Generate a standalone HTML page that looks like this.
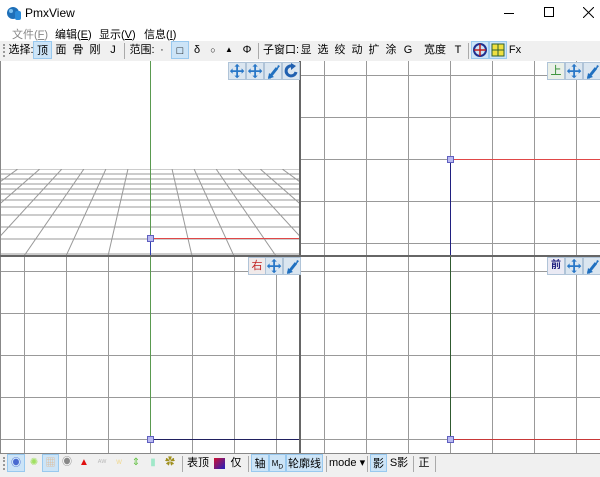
<!DOCTYPE html>
<html><head><meta charset="utf-8"><style>
*{margin:0;padding:0;box-sizing:border-box}
body{width:600px;height:473px;overflow:hidden;background:#f0f0f0;font-family:"Liberation Sans","Noto Sans CJK SC",sans-serif;font-size:12px;color:#000;position:relative}
.a{position:absolute;white-space:nowrap}
.btn{position:absolute;height:18px;top:0;line-height:18px;text-align:center;font-size:11px}
.sel{background:#cce4f7;border:1px solid #99c9ef}
.vb{position:absolute;width:18px;height:18px;background:#dbe6f0;border:1px solid #b0c4d8}
.sep{position:absolute;width:1px;height:16px;background:#aaa;top:2px}
</style></head><body>
<div class="a" style="left:0;top:0;width:600px;height:28px;background:#fff"></div>
<svg class="a" style="left:6px;top:5px" width="16" height="16"><circle cx="7" cy="8" r="6" fill="#1e6fb8"/><rect x="9" y="6" width="6" height="9" rx="2" fill="#2a8ad8"/><circle cx="5" cy="6" r="2" fill="#7cc0f0"/></svg>
<div class="a" style="left:25px;top:6px;font-size:12px">PmxView</div>
<div class="a" style="left:504px;top:13px;width:10px;height:1px;background:#000"></div>
<div class="a" style="left:544px;top:7px;width:10px;height:10px;border:1px solid #000"></div>
<svg class="a" style="left:583px;top:7px" width="11" height="11"><path d="M0 0L11 11M11 0L0 11" stroke="#000" stroke-width="1"/></svg>
<div class="a" style="left:0;top:28px;width:600px;height:14px;background:#fff"></div>
<div class="a" style="left:12px;top:26px;color:#888;font-size:11px">文件(<u>F</u>)</div>
<div class="a" style="left:55px;top:26px;font-size:11px">编辑(<u>E</u>)</div>
<div class="a" style="left:99px;top:26px;font-size:11px">显示(<u>V</u>)</div>
<div class="a" style="left:144px;top:26px;font-size:11px">信息(<u>I</u>)</div>
<div class="a" style="left:0;top:41px;width:600px;height:19px;background:#f0f0f0">
 <div class="a" style="left:3px;top:3px;width:2px;height:13px;border-left:2px dotted #999"></div>
 <div class="btn" style="left:8px;width:26px">选择:</div>
 <div class="btn sel" style="left:33px;width:19px">顶</div>
 <div class="btn" style="left:53px;width:16px">面</div>
 <div class="btn" style="left:70px;width:16px">骨</div>
 <div class="btn" style="left:87px;width:16px">刚</div>
 <div class="btn" style="left:106px;width:14px">J</div>
 <div class="sep" style="left:124px"></div>
 <div class="btn" style="left:128px;width:28px">范围:</div>
 <div class="btn" style="left:156px;width:12px">·</div>
 <div class="btn sel" style="left:171px;width:18px">□</div>
 <div class="btn" style="left:190px;width:14px">δ</div>
 <div class="btn" style="left:206px;width:14px;font-size:9px">○</div>
 <div class="btn" style="left:222px;width:14px;font-size:8px">▲</div>
 <div class="btn" style="left:240px;width:14px">Φ</div>
 <div class="sep" style="left:258px"></div>
 <div class="btn" style="left:263px;width:36px">子窗口:</div>
 <div class="btn" style="left:299px;width:14px">显</div>
 <div class="btn" style="left:316px;width:14px">选</div>
 <div class="btn" style="left:333px;width:14px">绞</div>
 <div class="btn" style="left:350px;width:14px">动</div>
 <div class="btn" style="left:367px;width:14px">扩</div>
 <div class="btn" style="left:384px;width:14px">涂</div>
 <div class="btn" style="left:402px;width:12px">G</div>
 <div class="btn" style="left:423px;width:24px">宽度</div>
 <div class="btn" style="left:452px;width:12px">T</div>
 <div class="sep" style="left:468px"></div>
 <div class="btn sel" style="left:471px;width:18px"><svg width="14" height="14" style="margin-top:1px"><circle cx="7" cy="7" r="6" fill="none" stroke="#203090" stroke-width="2"/><path d="M7 1V13M1 7H13" stroke="#c02020" stroke-width="1.5"/></svg></div>
 <div class="btn sel" style="left:489px;width:18px"><svg width="14" height="14" style="margin-top:1px"><rect x="1" y="1" width="12" height="12" fill="#f0e040" stroke="#306030"/><path d="M7 1V13M1 7H13" stroke="#306030"/></svg></div>
 <div class="btn" style="left:508px;width:14px">Fx</div>
</div>
<svg class="a" style="left:0;top:61px" width="600" height="393" viewBox="0 61 600 393">
<rect x="0" y="61" width="600" height="393" fill="#fff"/>
<defs><clipPath id="c1"><rect x="0" y="169" width="300" height="87"/></clipPath></defs>
<g stroke="#999" stroke-width="1" fill="none">
<g clip-path="url(#c1)">
<path d="M0 169H300M0 174H300M0 179H300M0 184H300M0 189H300M0 194H300M0 200H300M0 207H300M0 215H300M0 227H300M0 239H300M0 254H300"/>
<path d="M150 73L-270 256M150 73L-228 256M150 73L-186 256M150 73L-144 256M150 73L-102 256M150 73L-60 256M150 73L-18 256M150 73L24 256M150 73L66 256M150 73L108 256M150 73L192 256M150 73L234 256M150 73L276 256M150 73L318 256M150 73L360 256M150 73L402 256M150 73L444 256M150 73L486 256M150 73L528 256M150 73L570 256"/>
</g>
<path d="M324.5 61V256M366.5 61V256M408.5 61V256M492.5 61V256M534.5 61V256M576.5 61V256M301 75.5H600M301 117.5H600M301 201.5H600M301 243.5H600"/>
<path d="M450.5 61V159M301 159.5H450"/>
<path d="M24.5 257V454M66.5 257V454M108.5 257V454M192.5 257V454M234.5 257V454M276.5 257V454M0 271.5H300M0 313.5H300M0 355.5H300M0 397.5H300M0 439.5H150"/>
<path d="M150.5 439V454"/>
<path d="M324.5 257V454M366.5 257V454M408.5 257V454M492.5 257V454M534.5 257V454M576.5 257V454M301 271.5H600M301 313.5H600M301 355.5H600M301 397.5H600M301 439.5H450"/>
<path d="M450.5 439V454"/>
</g>
<g fill="none" stroke-width="1">
<path d="M150.5 61V238" stroke="#5a9a50"/>
<path d="M150 238.5H300" stroke="#e04848"/>
<path d="M150.5 238V256" stroke="#3040b0"/>
<path d="M450.5 159V256" stroke="#202080"/>
<path d="M150.5 257V439" stroke="#5a9a50"/>
<path d="M150 439.5H300" stroke="#202060"/>
<path d="M450.5 257V439" stroke="#305a30"/>
</g>
<rect x="0" y="61" width="1" height="393" fill="#888"/>
<rect x="299" y="61" width="2" height="393" fill="#666"/>
<rect x="0" y="255" width="600" height="2" fill="#666"/>
<rect x="0" y="453" width="600" height="1" fill="#888"/>
</svg>
<div class="a" style="left:450px;top:159px;width:150px;height:1px;background:#e04848"></div>
<div class="a" style="left:450px;top:439px;width:150px;height:1px;background:#c83838"></div>
<div class="a" style="left:147px;top:235px;width:7px;height:7px;background:#b8b8f0;border:1px solid #6060c0"></div>
<div class="a" style="left:447px;top:156px;width:7px;height:7px;background:#b8b8f0;border:1px solid #6060c0"></div>
<div class="a" style="left:147px;top:436px;width:7px;height:7px;background:#b8b8f0;border:1px solid #6060c0"></div>
<div class="a" style="left:447px;top:436px;width:7px;height:7px;background:#b8b8f0;border:1px solid #6060c0"></div>
<svg width="0" height="0" style="position:absolute"><defs>
<g id="mv"><path d="M9 2V16M2 9H16" stroke="#2a78c8" stroke-width="2"/><path d="M9 1L6 4H12ZM9 17L6 14H12ZM1 9L4 6V12ZM17 9L14 6V12Z" fill="#2a78c8"/></g>
<g id="zm"><path d="M4 15L12 5" stroke="#2070c0" stroke-width="3"/><path d="M3 16L4 10L9 14Z M13 2L15 3L11 8Z" fill="#2070c0"/></g>
</defs></svg>
<div class="vb" style="left:228px;top:62px"><svg width="16" height="16"><g transform="scale(.9)"><use href="#mv"/></g></svg></div>
<div class="vb" style="left:246px;top:62px"><svg width="16" height="16"><g transform="scale(.9)"><use href="#mv"/></g></svg></div>
<div class="vb" style="left:264px;top:62px"><svg width="16" height="16"><use href="#zm"/></svg></div>
<div class="vb" style="left:282px;top:62px"><svg width="16" height="16"><path d="M13 9A5 5 0 1 1 9 3" fill="none" stroke="#2060b0" stroke-width="3"/><path d="M8 0L13 3L8 7Z" fill="#2060b0"/></svg></div>
<div class="vb" style="left:547px;top:62px;background:#eaf0e8;color:#2a8a2a;font-size:11px;text-align:center;line-height:16px">上</div>
<div class="vb" style="left:565px;top:62px"><svg width="16" height="16"><g transform="scale(.9)"><use href="#mv"/></g></svg></div>
<div class="vb" style="left:583px;top:62px"><svg width="16" height="16"><use href="#zm"/></svg></div>
<div class="vb" style="left:248px;top:257px;background:#f0eaea;color:#c02020;font-size:11px;text-align:center;line-height:16px">右</div>
<div class="vb" style="left:265px;top:257px"><svg width="16" height="16"><g transform="scale(.9)"><use href="#mv"/></g></svg></div>
<div class="vb" style="left:283px;top:257px"><svg width="16" height="16"><use href="#zm"/></svg></div>
<div class="vb" style="left:547px;top:257px;background:#eaeaf4;color:#202080;font-size:10px;text-align:center;line-height:16px;font-weight:bold">前</div>
<div class="vb" style="left:565px;top:257px"><svg width="16" height="16"><g transform="scale(.9)"><use href="#mv"/></g></svg></div>
<div class="vb" style="left:583px;top:257px"><svg width="16" height="16"><use href="#zm"/></svg></div>
<div class="a" style="left:0;top:454px;width:600px;height:19px;background:#f0f0f0">
 <div class="a" style="left:3px;top:3px;width:2px;height:13px;border-left:2px dotted #999"></div>
 <div class="btn sel" style="left:7px;width:18px;color:#4a6ad0;font-size:10px">◉</div>
 <div class="btn" style="left:27px;width:14px;color:#a0e060;font-size:10px">✺</div>
 <div class="btn sel" style="left:42px;width:17px;color:#e0b890;font-size:10px">▦</div>
 <div class="btn" style="left:60px;width:14px;color:#888;font-size:10px">◉</div>
 <div class="btn" style="left:77px;width:14px;color:#e01010;font-size:10px">▲</div>
 <div class="btn" style="left:95px;width:14px;color:#bbb;font-size:8px">ᴬᵂ</div>
 <div class="btn" style="left:112px;width:14px;color:#f0d890;font-size:9px">ᵂ</div>
 <div class="btn" style="left:129px;width:14px;color:#60c040;font-size:10px">⇕</div>
 <div class="btn" style="left:146px;width:14px;color:#a0e8c8;font-size:10px">▮</div>
 <div class="btn" style="left:163px;width:14px;color:#a09020;font-size:10px">✿</div>
 <div class="sep" style="left:182px"></div>
 <div class="btn" style="left:186px;width:24px">表顶</div>
 <div class="a" style="left:214px;top:4px;width:11px;height:11px;background:linear-gradient(135deg,#d01030,#2020c0)"></div>
 <div class="btn" style="left:229px;width:14px">仅</div>
 <div class="sep" style="left:248px"></div>
 <div class="btn sel" style="left:251px;width:18px">轴</div>
 <div class="btn sel" style="left:269px;width:17px;font-size:8px">M<sub>D</sub></div>
 <div class="btn sel" style="left:286px;width:37px">轮廓线</div>
 <div class="sep" style="left:326px"></div>
 <div class="btn" style="left:329px;width:36px">mode ▾</div>
 <div class="sep" style="left:367px"></div>
 <div class="btn sel" style="left:370px;width:17px">影</div>
 <div class="btn" style="left:388px;width:22px">S影</div>
 <div class="sep" style="left:413px"></div>
 <div class="btn" style="left:417px;width:14px">正</div>
 <div class="sep" style="left:435px"></div>
</div>
</body></html>
